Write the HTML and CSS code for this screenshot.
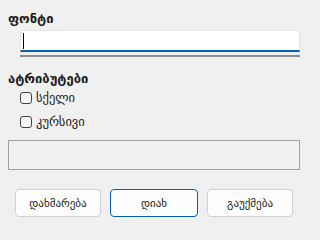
FILE: index.html
```html
<!DOCTYPE html>
<html lang="ka">
<head>
<meta charset="utf-8">
<title>ფონტი</title>
<link rel="stylesheet" href="styles.css">
</head>
<body>
<div class="dialog">
  <div class="label">ფონტი</div>
  <div class="field">
    <div class="input"><span class="caret"></span></div>
    <div class="underbar"></div>
  </div>
  <div class="label attrs">ატრიბუტები</div>
  <div class="checks">
    <label class="check"><span class="box"></span><span>სქელი</span></label>
    <label class="check"><span class="box"></span><span>კურსივი</span></label>
  </div>
  <div class="preview"></div>
  <div class="buttons">
    <button class="btn">დახმარება</button>
    <button class="btn primary">დიახ</button>
    <button class="btn">გაუქმება</button>
  </div>
</div>
</body>
</html>
```

FILE: styles.css
```css
html, body {
  margin: 0;
  padding: 0;
  background: #f0f0f0;
}
body {
  width: 308px;
  height: 231px;
  overflow: hidden;
  font-family: "DejaVu Sans", "Noto Sans", sans-serif;
  font-size: 12px;
  color: #1a1a1a;
}
.dialog {
  display: flex;
  flex-direction: column;
  padding: 11px 8px 0 8px;
}
.label {
  font-weight: bold;
  font-size: 13px;
  height: 15px;
  line-height: 15px;
}
.field {
  margin: 4px 0 0 12px;
  display: flex;
  flex-direction: column;
}
.input {
  height: 19px;
  background: #ffffff;
  border: 1px solid #e5e5e5;
  border-bottom: 2px solid #005fb8;
  display: flex;
  align-items: center;
  padding-left: 2px;
}
.caret {
  width: 1px;
  height: 16px;
  background: #000;
}
.underbar {
  margin-top: 3px;
  height: 2px;
  background: #8d8d8d;
}
.attrs {
  margin-top: 14px;
}
.checks {
  display: flex;
  flex-direction: column;
  gap: 10px;
  margin: 5px 0 0 12px;
}
.check {
  display: flex;
  align-items: center;
  gap: 4px;
  height: 14px;
  line-height: 14px;
  font-size: 12.5px;
}
.box {
  width: 10px;
  height: 10px;
  border: 1px solid #444;
  border-radius: 3px;
  background: #f6f6f6;
}
.preview {
  margin-top: 11px;
  height: 28px;
  border: 1px solid #a0a0a0;
}
.buttons {
  display: flex;
  gap: 9px;
  margin: 19px 0 0 7px;
}
.btn {
  width: 86px;
  height: 28px;
  background: #fdfdfd;
  border: 1px solid #d0d0d0;
  border-radius: 4px;
  font-family: inherit;
  font-size: 11px;
  color: #1a1a1a;
  padding: 0;
}
.btn.primary {
  width: 88px;
  border-color: #005fb8;
}
```
